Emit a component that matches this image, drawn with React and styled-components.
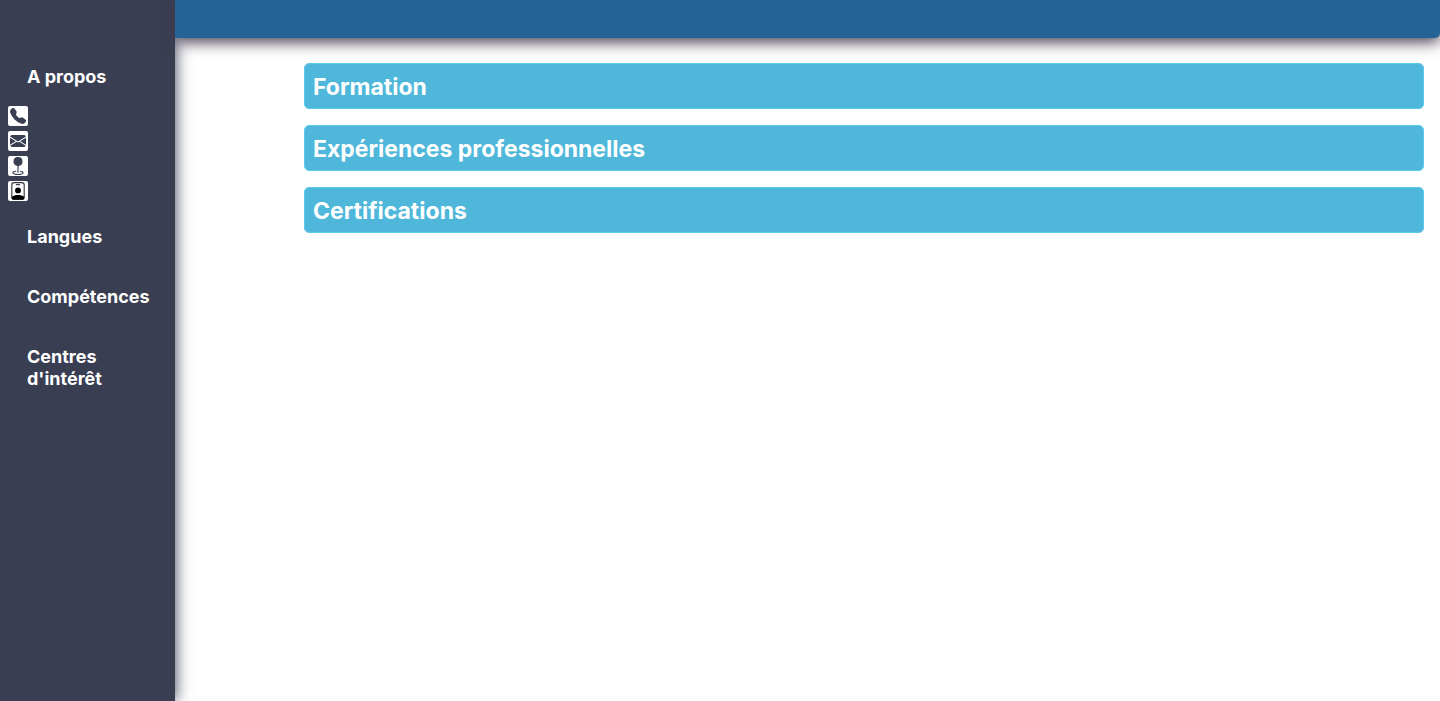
import React from "react";
import styled, { createGlobalStyle } from "styled-components";
import { BsTelephoneFill, BsEnvelopeFill, BsGeoFill } from "react-icons/bs";

const GlobalStyle = createGlobalStyle`
  * { box-sizing: border-box; }
  body {
    margin: 0;
    background: #fff;
    font-family: Inter, "Liberation Sans", sans-serif;
  }
`;

const Page = styled.div`
  display: grid;
  grid-template-columns: 175px 1fr;
  min-height: 100vh;
`;

const Sidebar = styled.aside`
  padding: 66px 8px 0;
  background: #393e52;
  color: #fff;
  box-shadow: 0 0 15px #393e52;
`;

const SideTitle = styled.h2`
  margin: 0 0 38px;
  padding: 0 16px 0 19px;
  font-size: 18px;
  line-height: 22px;
  font-weight: 700;
`;

const ContactList = styled.ul`
  display: grid;
  gap: 5px;
  margin: -20px 0 25px;
  padding: 0;
  list-style: none;
`;

const ContactIcon = styled.li`
  display: grid;
  place-items: center;
  width: 20px;
  height: 20px;
  border-radius: 2px;
  background: #fff;
  color: #393e52;
`;

const Content = styled.div`
  min-width: 0;
`;

const TopBar = styled.header`
  height: 38px;
  border-radius: 0 0 5px 0;
  background: #256394;
  box-shadow: 0 4px 15px #443850;
`;

const Main = styled.main`
  display: grid;
  gap: 16px;
  padding: 25px 16px 25px 129px;
`;

const Section = styled.section`
  padding: 9px 8px 7px;
  border: 1px solid #5bcbec;
  border-radius: 5px;
  background: #4eb7da;
  color: #fff;
`;

const SectionTitle = styled.h2`
  margin: 0;
  font-size: 23px;
  line-height: 28px;
  font-weight: 700;
`;

function BadgeIcon() {
  return (
    <svg width="18" height="18" viewBox="0 0 16 16" aria-hidden="true">
      <rect x="2.5" y="0.5" width="11" height="15" rx="2" fill="none" stroke="#33343c" />
      <path d="M6.5 2.3h3" stroke="#393e52" strokeLinecap="round" />
      <circle cx="8" cy="7.5" r="2.6" fill="#000" />
      <path d="M2.5 13.2C4 12 5.6 11.5 8 11.5s4 .5 5.5 1.7V14a1.5 1.5 0 0 1-1.5 1.5H4A1.5 1.5 0 0 1 2.5 14z" fill="#000" />
    </svg>
  );
}

export default function App() {
  return (
    <>
      <GlobalStyle />
      <Page>
        <Sidebar>
          <SideTitle>A propos</SideTitle>
          <ContactList>
            <ContactIcon><BsTelephoneFill size={16} /></ContactIcon>
            <ContactIcon><BsEnvelopeFill size={16} /></ContactIcon>
            <ContactIcon><BsGeoFill size={18} /></ContactIcon>
            <ContactIcon><BadgeIcon /></ContactIcon>
          </ContactList>
          <SideTitle>Langues</SideTitle>
          <SideTitle>Compétences</SideTitle>
          <SideTitle>Centres d'intérêt</SideTitle>
        </Sidebar>
        <Content>
          <TopBar />
          <Main>
            <Section><SectionTitle>Formation</SectionTitle></Section>
            <Section><SectionTitle>Expériences professionnelles</SectionTitle></Section>
            <Section><SectionTitle>Certifications</SectionTitle></Section>
          </Main>
        </Content>
      </Page>
    </>
  );
}
